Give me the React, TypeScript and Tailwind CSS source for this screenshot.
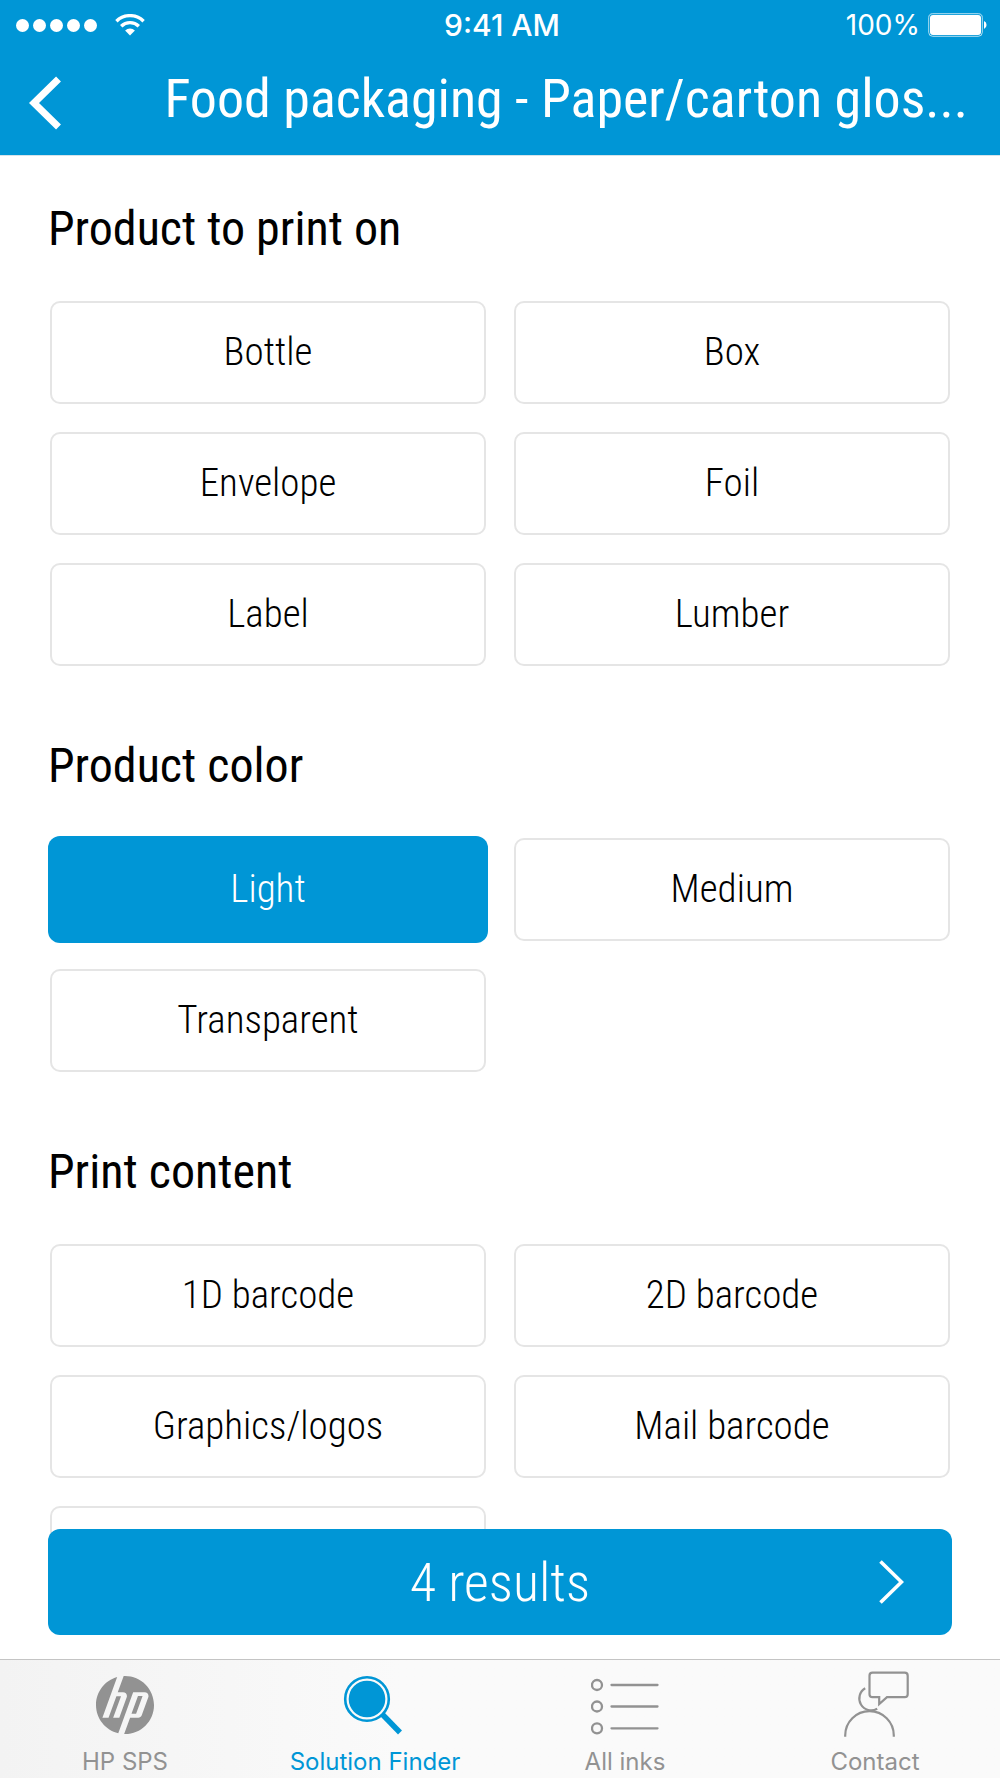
import { useState } from 'react';
import type { ReactNode } from 'react';
import { SiHp } from 'react-icons/si';

type Section = {
    title: string;
    options: string[];
};

const sections: Section[] = [
    { title: 'Product to print on', options: ['Bottle', 'Box', 'Envelope', 'Foil', 'Label', 'Lumber'] },
    { title: 'Product color', options: ['Light', 'Medium', 'Transparent'] },
    { title: 'Print content', options: ['1D barcode', '2D barcode', 'Graphics/logos', 'Mail barcode', 'Text'] },
];

const StatusBar = () => (
    <div className="grid h-[50px] grid-cols-[1fr_auto_1fr] items-center pr-3 pl-4 font-['Inter',sans-serif] text-[28px] leading-none">
        <div className="flex items-center gap-[18px]">
            <div className="flex gap-1">
                {[0, 1, 2, 3, 4].map((i) => (
                    <span key={i} className="size-[13px] rounded-full bg-white" />
                ))}
            </div>
            <svg width="30" height="22" viewBox="0 0 30 22" fill="none" stroke="currentColor" strokeWidth="3.4">
                <path d="M1.4 7.2a19.4 19.4 0 0 1 27.2 0" />
                <path d="M6.2 12.2a12.6 12.6 0 0 1 17.6 0" />
                <path d="M15 21.5l-4.9-5.1a7 7 0 0 1 9.8 0z" fill="currentColor" stroke="none" />
            </svg>
        </div>
        <div className="text-[30px] font-medium">9:41 AM</div>
        <div className="flex items-center justify-end gap-2">
            <span>100%</span>
            <svg width="60" height="24" viewBox="0 0 60 24">
                <rect x="0.7" y="0.7" width="53.6" height="22.6" rx="4" fill="none" stroke="#fff" strokeOpacity="0.7" />
                <rect x="2" y="2" width="51" height="20" rx="3" fill="#fff" />
                <path d="M56 8a4.4 4.4 0 0 1 0 8z" fill="#fff" />
            </svg>
        </div>
    </div>
);

const Header = () => (
    <header className="border-b border-[#d5e3ea] bg-[#0096d6] text-white">
        <StatusBar />
        <div className="flex h-[105px] items-center pr-8 pl-7">
            <button type="button" aria-label="Back" className="shrink-0">
                <svg width="36" height="54" viewBox="0 0 36 54" fill="none" stroke="currentColor" strokeWidth="7">
                    <path d="M30.5 3L6 27l24.5 24" />
                </svg>
            </button>
            <h1 className="min-w-0 flex-1 truncate pb-2 text-right text-[54px] leading-[70px] font-[450]">
                Food packaging - Paper/carton glos...
            </h1>
        </div>
    </header>
);

type OptionButtonProps = {
    label: string;
    selected: boolean;
    onClick: () => void;
};

const OptionButton = ({ label, selected, onClick }: OptionButtonProps) => (
    <button
        type="button"
        aria-pressed={selected}
        onClick={onClick}
        className={
            selected
                ? 'rounded-xl bg-[#0096d6] text-[39px] font-light text-white'
                : 'm-0.5 rounded-[10px] border-2 border-[#e5e5e5] bg-white text-[39px] font-light text-black'
        }
    >
        {label}
    </button>
);

const FinderIcon = () => (
    <svg width="68" height="70" viewBox="0 0 68 70" fill="none" stroke="currentColor">
        <circle cx="26" cy="31" r="21.8" strokeWidth="2.6" />
        <circle cx="26" cy="31" r="18.3" fill="currentColor" stroke="none" />
        <path d="M41.5 46.5L59 64.5" strokeWidth="5.5" />
    </svg>
);

const ListIcon = () => (
    <svg width="68" height="70" viewBox="0 0 68 70" fill="none" stroke="currentColor" strokeWidth="2.3" strokeLinecap="round">
        {[17, 38.5, 60.3].map((y) => (
            <g key={y}>
                <circle cx="6" cy={y} r="5" />
                <path d={`M20.5 ${y}H66.5`} />
            </g>
        ))}
    </svg>
);

const ContactIcon = () => (
    <svg width="68" height="70" viewBox="0 0 68 70" fill="none" stroke="currentColor" strokeWidth="2.2">
        <path d="M24.2 20.3A11.8 11.8 0 1 0 36.2 40.8" />
        <path d="M4.2 68.8V67.5a24.3 24.3 0 0 1 48.6 0V68.8" />
        <path d="M31.5 4.7H63.7a3 3 0 0 1 3 3V26.2a3 3 0 0 1 -3 3H46L38.2 36V29.2H31.5a3 3 0 0 1 -3 -3V7.7a3 3 0 0 1 3 -3z" />
    </svg>
);

const tabs: { label: string; icon: ReactNode }[] = [
    { label: 'HP SPS', icon: <SiHp size={58} className="mt-1" /> },
    { label: 'Solution Finder', icon: <FinderIcon /> },
    { label: 'All inks', icon: <ListIcon /> },
    { label: 'Contact', icon: <ContactIcon /> },
];

const TabBar = () => (
    <nav className="grid grid-cols-4 border-t border-[#c4c4c4] bg-linear-to-r from-[#f3f3f3] to-[#fafafa] to-40% pt-2 pb-0.5 font-['Inter',sans-serif]">
        {tabs.map((tab) => (
            <a
                key={tab.label}
                href="#"
                aria-current={tab.label === 'Solution Finder' ? 'page' : undefined}
                className="flex flex-col items-center gap-2.5 text-[#929292] aria-[current=page]:text-[#0096d6]"
            >
                <span className="flex h-[70px] items-center">{tab.icon}</span>
                <span className="text-[24px] leading-7">{tab.label}</span>
            </a>
        ))}
    </nav>
);

export default function App() {
    const [selected, setSelected] = useState<string[]>(['Light']);

    const toggle = (option: string) => {
        setSelected((prev) => (prev.includes(option) ? prev.filter((o) => o !== option) : [...prev, option]));
    };

    return (
        <div className="flex h-screen flex-col bg-white font-['Roboto_Condensed','Roboto',sans-serif] text-black">
            <Header />
            <div className="relative min-h-0 flex-1">
                <main className="flex h-full flex-col gap-[70px] overflow-y-auto px-12 pt-[45px] [scrollbar-width:none]">
                    {sections.map((section) => (
                        <section key={section.title}>
                            <h2 className="mb-[42px] text-[48px] leading-14 font-[450]">{section.title}</h2>
                            <div className="grid auto-rows-[107px] grid-cols-2 gap-6">
                                {section.options.map((option) => (
                                    <OptionButton
                                        key={option}
                                        label={option}
                                        selected={selected.includes(option)}
                                        onClick={() => toggle(option)}
                                    />
                                ))}
                            </div>
                        </section>
                    ))}
                </main>

                {/* Stays above the scrolling options */}
                <div className="absolute inset-x-0 bottom-0 px-12 pb-6">
                    <button
                        type="button"
                        className="grid h-[106px] w-full grid-cols-[1fr_auto_1fr] items-center rounded-xl bg-[#0096d6] px-12 text-white"
                    >
                        <span className="col-start-2 text-[54px] font-light">4 results</span>
                        <svg
                            className="justify-self-end"
                            width="26"
                            height="44"
                            viewBox="0 0 26 44"
                            fill="none"
                            stroke="currentColor"
                            strokeWidth="3.6"
                        >
                            <path d="M2.5 1.5L23.5 22L2.5 42.5" />
                        </svg>
                    </button>
                </div>
            </div>
            <TabBar />
        </div>
    );
}
